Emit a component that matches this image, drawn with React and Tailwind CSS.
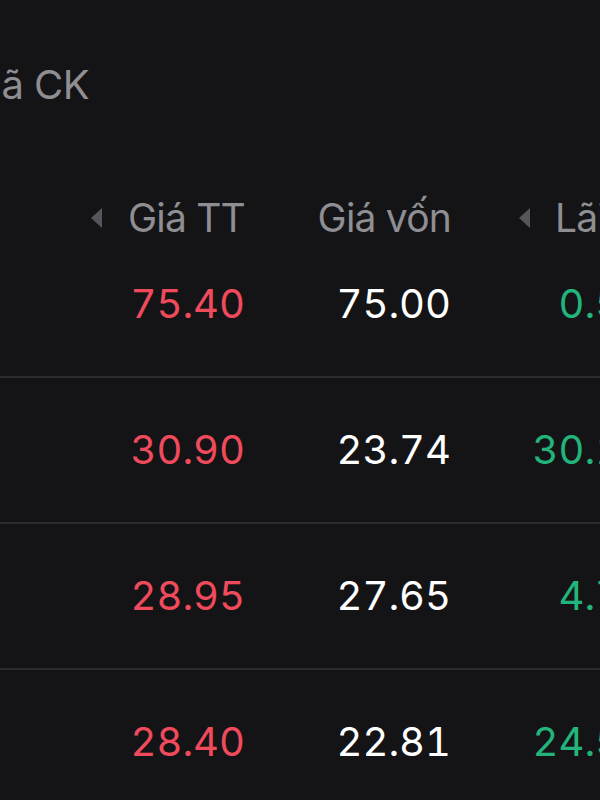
import React from "react";

const rows = [
  { price: "75.40", cost: "75.00", pnl: "0.53" },
  { price: "30.90", cost: "23.74", pnl: "30.16" },
  { price: "28.95", cost: "27.65", pnl: "4.70" },
  { price: "28.40", cost: "22.81", pnl: "24.51" },
];

function Caret() {
  return (
    <svg width="13" height="22" viewBox="0 0 13 22" className="shrink-0">
      <path d="M12 1 L1 11 L12 21 Z" fill="#55565b" />
    </svg>
  );
}

export default function App() {
  return (
    <div
      className="w-[600px] h-[800px] overflow-hidden bg-[#141416] text-white"
      style={{ fontFamily: "Inter, 'Noto Sans', sans-serif" }}
    >
      {/* ticker label */}
      <div className="h-[170px] flex items-center">
        <span className="-ml-[34px] text-[40px] tracking-[-0.6px] text-[#8e8e93] whitespace-nowrap">Mã CK</span>
      </div>

      {/* column headers */}
      <div className="h-[62px] flex items-end text-[39px] tracking-[-0.8px] leading-[28px] text-[#8e8e93] whitespace-nowrap">
        <div className="w-[245px] shrink-0 flex items-center justify-end gap-[25px]">
          <Caret />
          <span>Giá TT</span>
        </div>
        <div className="w-[206px] shrink-0 flex justify-end">
          <span>Giá vốn</span>
        </div>
        <div className="w-[200px] shrink-0 flex items-center pl-[67px] gap-[24px]">
          <Caret />
          <span>Lãi/Lỗ</span>
        </div>
      </div>

      {/* positions */}
      <div className="flex flex-col">
        {rows.map((r, i) => (
          <div
            key={i}
            className="h-[146px] flex items-center text-[40px] tabular-nums whitespace-nowrap border-b-2 border-[#2c2c2e]"
          >
            <div className="w-[245px] shrink-0 text-right text-[#f04b5c]">{r.price}</div>
            <div className="w-[206px] shrink-0 text-right">{r.cost}</div>
            <div className="w-[196px] shrink-0 text-right text-[#22b47b]">{r.pnl}</div>
          </div>
        ))}
      </div>
    </div>
  );
}
